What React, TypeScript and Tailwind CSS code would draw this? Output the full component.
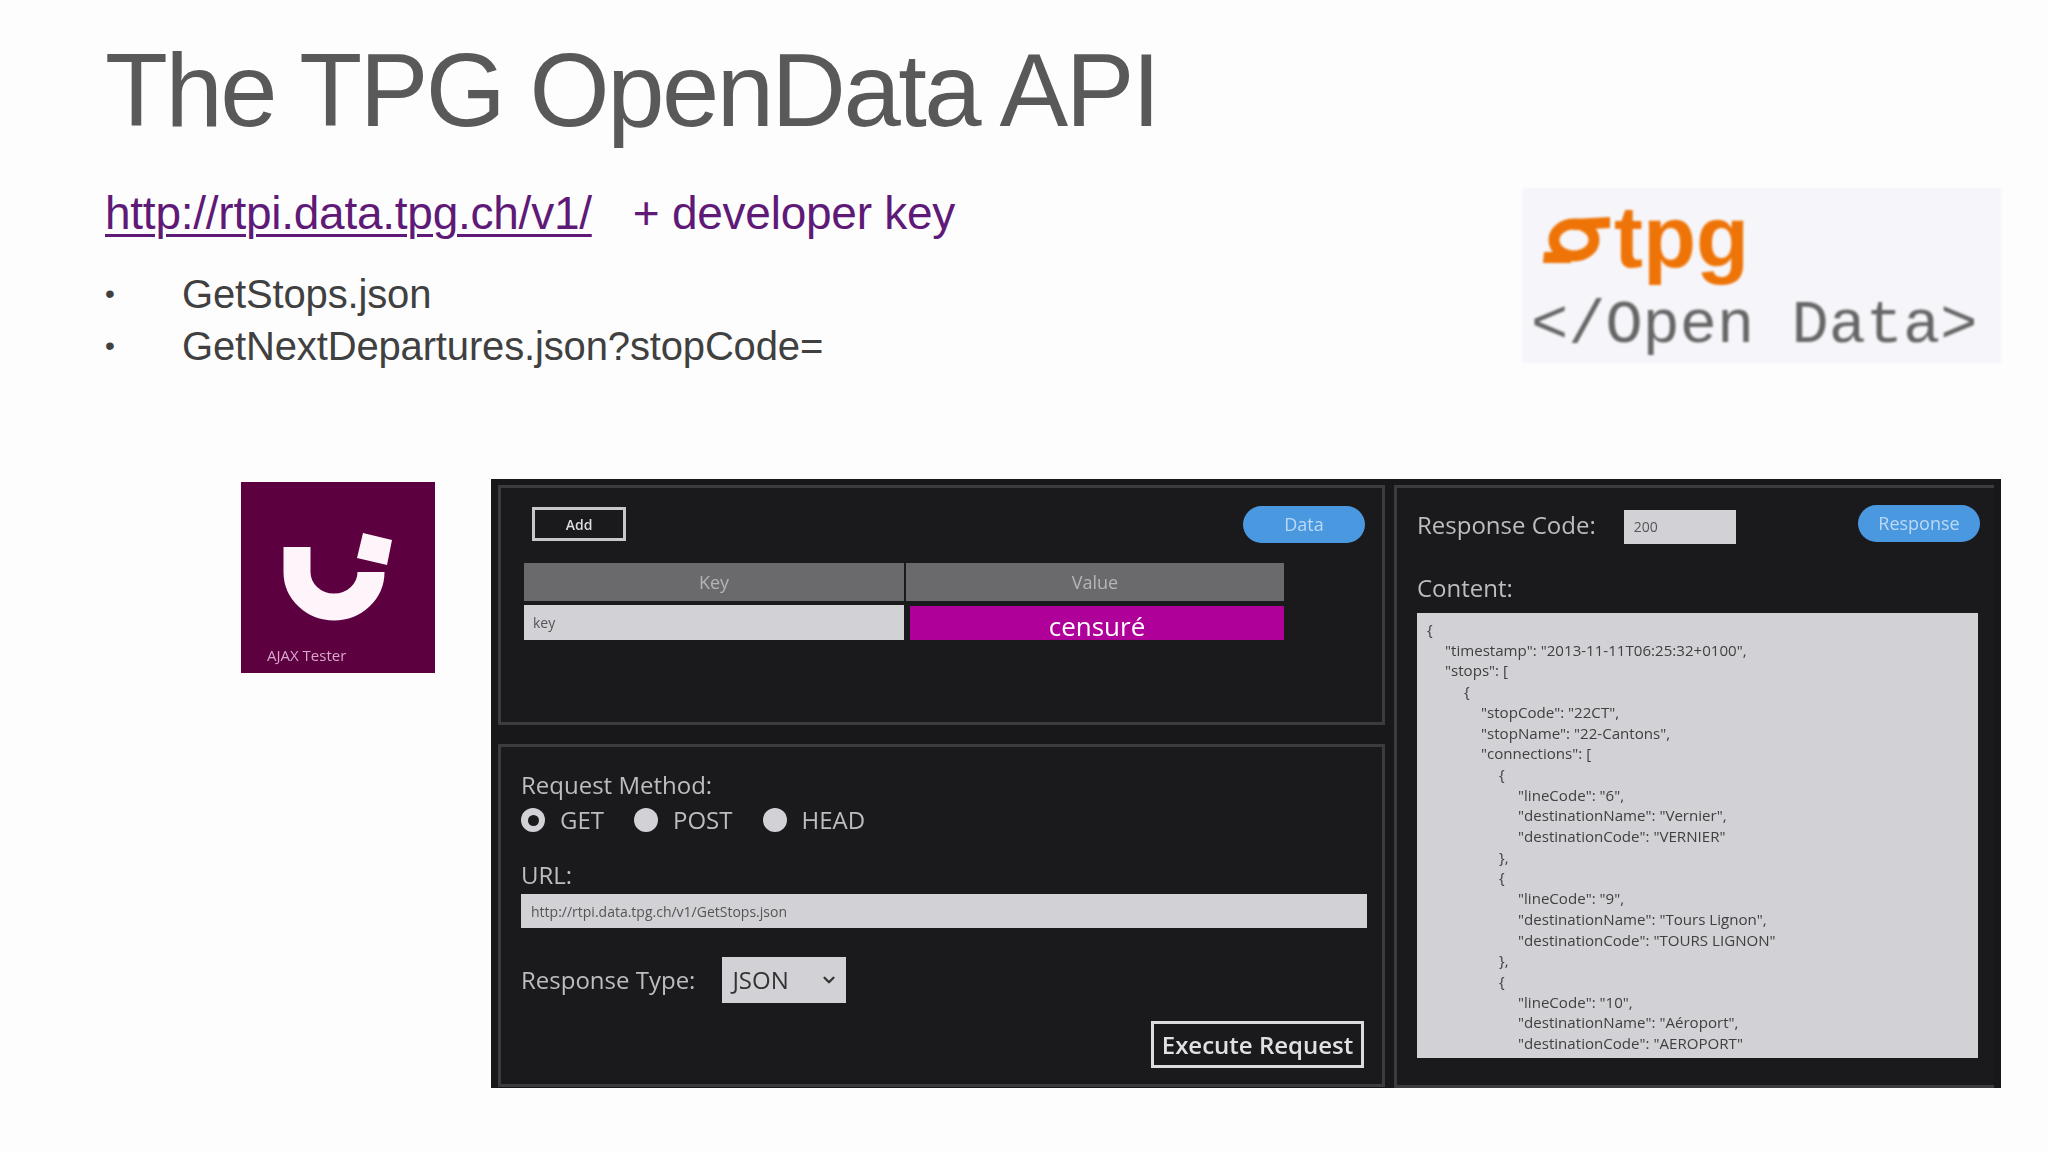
import { ChevronDown } from "lucide-react";

const indents = ["pl-0", "pl-[18px]", "pl-[37px]", "pl-[54px]", "pl-[72px]", "pl-[91px]"];

const jsonLines: [number, string][] = [
  [0, "{"],
  [1, '"timestamp": "2013-11-11T06:25:32+0100",'],
  [1, '"stops": ['],
  [2, "{"],
  [3, '"stopCode": "22CT",'],
  [3, '"stopName": "22-Cantons",'],
  [3, '"connections": ['],
  [4, "{"],
  [5, '"lineCode": "6",'],
  [5, '"destinationName": "Vernier",'],
  [5, '"destinationCode": "VERNIER"'],
  [4, "},"],
  [4, "{"],
  [5, '"lineCode": "9",'],
  [5, '"destinationName": "Tours Lignon",'],
  [5, '"destinationCode": "TOURS LIGNON"'],
  [4, "},"],
  [4, "{"],
  [5, '"lineCode": "10",'],
  [5, '"destinationName": "Aéroport",'],
  [5, '"destinationCode": "AEROPORT"'],
];

function Radio({ checked, label }: { checked?: boolean; label: string }) {
  return (
    <div className="flex items-center gap-[15px]">
      <span className="flex h-[24px] w-[24px] items-center justify-center rounded-full bg-[#d2d1d5]">
        {checked && <span className="h-[11px] w-[11px] rounded-full bg-[#1a191c]" />}
      </span>
      <span className="text-[24px] leading-[30px] text-[#bdbcc0]">{label}</span>
    </div>
  );
}

function Pill({ label }: { label: string }) {
  return (
    <div className="flex h-[37px] w-[122px] items-center justify-center rounded-full bg-[#4a98e0] text-[18px] text-[#bcd9f2]">
      {label}
    </div>
  );
}

export default function App() {
  return (
    <div className="h-[1152px] w-[2048px] overflow-hidden bg-[#fdfdfe] font-['Liberation_Sans',sans-serif]">
      <h1 className="h-[188px] pl-[105px] pt-[32px] text-[103px] leading-[118px] tracking-[-2.5px] text-[#595959]">
        The TPG OpenData API
      </h1>
      <div className="flex h-[291px] items-start justify-between pr-[47px]">
        <div className="pl-[105px]">
          <div className="flex text-[46px] leading-[50px] tracking-[-0.25px] text-[#5f1a78]">
            <span className="underline decoration-[3px] underline-offset-[5px]">http://rtpi.data.tpg.ch/v1/</span>
            <span className="ml-[41px]">+ developer key</span>
          </div>
          <ul className="mt-[30px] text-[40px] leading-[52px] tracking-[-0.15px] text-[#404040]">
            <li className="flex"><span className="w-[77px] text-[28px]">•</span>GetStops.json</li>
            <li className="flex"><span className="w-[77px] text-[28px]">•</span>GetNextDepartures.json?stopCode=</li>
          </ul>
        </div>
        <div className="h-[175px] w-[478px] bg-[#f6f6fa] pl-[8px] blur-[0.8px]">
          <div className="flex h-[105px] items-start pl-[12px]">
            <svg viewBox="0 0 67 50" className="mt-[26px] h-[50px] w-[67px]">
              <ellipse cx="31" cy="26" rx="20" ry="16" fill="none" stroke="#ef7407" strokeWidth="11" />
              <path d="M30 5L67 3V14L30 16ZM1 38H28V49H0Z" fill="#ef7407" />
            </svg>
            <span className="ml-[4px] mt-[1px] text-[87px] font-bold leading-[96px] text-[#ef7407]">tpg</span>
          </div>
          <div className="font-['Liberation_Mono',monospace] text-[62px] leading-[66px] text-[#666666]">
            &lt;/Open Data&gt;
          </div>
        </div>
      </div>
      <div className="flex items-start pl-[241px] font-['Open_Sans',sans-serif]">
        <div className="mt-[3px] flex h-[191px] w-[194px] flex-col justify-between bg-[#5c0040] pb-[8px]">
          <svg viewBox="0 0 194 145" className="h-[145px] w-[194px] blur-[0.6px]">
            <path d="M56 65V90A37 35 0 0 0 130 90" fill="none" stroke="#fdf5fa" strokeWidth="27" />
            <path d="M122 51L151 58L146 83L116 76Z" fill="#fdf5fa" />
          </svg>
          <div className="pl-[26px] text-[15px] leading-[20px] text-[#d9a8cc] blur-[0.5px]">AJAX Tester</div>
        </div>
        <div className="ml-[56px] flex h-[609px] w-[1510px] gap-[9px] bg-[#18171a] px-[7px] pt-[6px] blur-[0.7px]">
          <div className="flex w-[887px] flex-col gap-[19px]">
            <div className="h-[240px] border-[3px] border-[#3c3c3f] bg-[#1a191c] pl-[23px] pr-[17px]">
              <div className="flex h-[75px] items-center justify-between pb-[3px] pl-[8px]">
                <div className="flex h-[34px] w-[94px] items-center justify-center border-[3px] border-[#c8c8cb] text-[14px] font-semibold text-[#dcdcdf]">Add</div>
                <Pill label="Data" />
              </div>
              <div className="w-[760px]">
                <div className="flex h-[38px] gap-[2px] text-[18px] text-[#b5b5b8]">
                  <div className="flex w-[380px] items-center justify-center bg-[#6a6a6c]">Key</div>
                  <div className="flex flex-1 items-center justify-center bg-[#6a6a6c]">Value</div>
                </div>
                <div className="mt-[4px] flex h-[35px] gap-[2px]">
                  <div className="flex w-[380px] items-center bg-[#d2d1d5] pl-[9px] text-[14px] text-[#555]">key</div>
                  <div className="ml-[4px] mt-[1px] flex flex-1 items-center justify-center bg-[#b0009a] pt-[5px] text-[26px] leading-[26px] text-white">censuré</div>
                </div>
              </div>
            </div>
            <div className="h-[343px] border-[3px] border-[#3c3c3f] bg-[#1a191c] pl-[20px] pr-[15px] pt-[21px]">
              <div className="text-[24px] leading-[34px] text-[#bdbcc0]">Request Method:</div>
              <div className="mt-[3px] flex gap-[30px]">
                <Radio checked label="GET" />
                <Radio label="POST" />
                <Radio label="HEAD" />
              </div>
              <div className="mt-[23px] text-[24px] leading-[34px] text-[#bdbcc0]">URL:</div>
              <div className="mt-[2px] flex h-[34px] items-center bg-[#d2d1d5] pl-[10px] text-[14px] text-[#555]">http://rtpi.data.tpg.ch/v1/GetStops.json</div>
              <div className="mt-[29px] flex items-center gap-[27px]">
                <span className="text-[24px] leading-[34px] text-[#bdbcc0]">Response Type:</span>
                <div className="flex h-[46px] w-[124px] items-center justify-between bg-[#d2d1d5] pl-[10px] pr-[8px] text-[24px] text-[#333]">
                  JSON
                  <ChevronDown size={18} strokeWidth={3} />
                </div>
              </div>
              <div className="mt-[18px] flex justify-end pr-[3px]">
                <div className="flex h-[47px] w-[213px] items-center justify-center border-[3px] border-[#dcdcdf] text-[24px] font-semibold text-[#e0e0e3]">Execute Request</div>
              </div>
            </div>
          </div>
          <div className="h-[603px] flex-1 border-b-[3px] border-l-[3px] border-t-[3px] border-[#3c3c3f] bg-[#1a191c] pl-[20px] pr-[14px] pt-[18px]">
            <div className="flex h-[37px] items-center">
              <span className="text-[24px] text-[#bdbcc0]">Response Code:</span>
              <div className="ml-[28px] mt-[4px] flex h-[34px] w-[112px] items-center bg-[#d2d1d5] pl-[10px] text-[14px] text-[#555]">200</div>
              <div className="mb-[2px] ml-auto"><Pill label="Response" /></div>
            </div>
            <div className="mt-[28px] text-[24px] leading-[34px] text-[#bdbcc0]">Content:</div>
            <div className="mt-[8px] h-[445px] w-[561px] overflow-hidden bg-[#d2d1d5] pl-[10px] pt-[6px] text-[15.1px] leading-[20.7px] text-[#404040]">
              {jsonLines.map(([indent, text], i) => (
                <div key={i} className={`whitespace-pre ${indents[indent]}`}>{text}</div>
              ))}
            </div>
          </div>
        </div>
      </div>
    </div>
  );
}
